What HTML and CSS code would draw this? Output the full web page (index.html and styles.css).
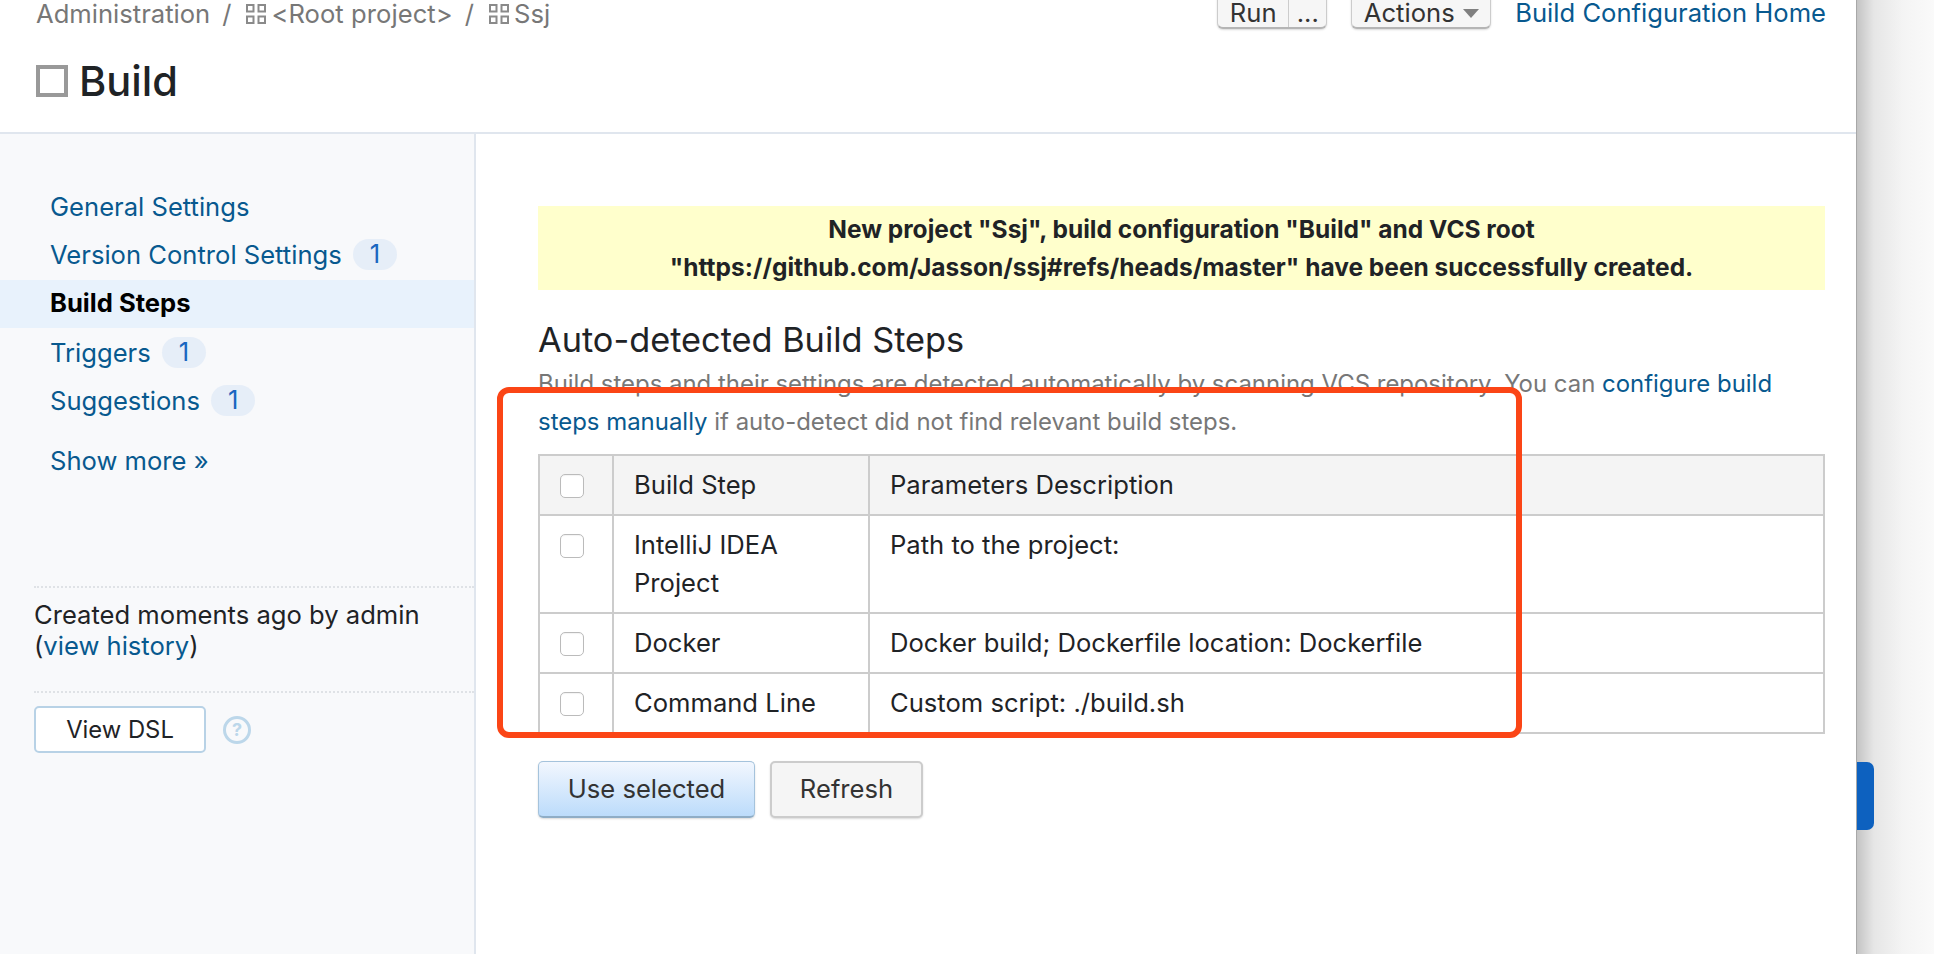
FILE: index.html
```html
<!DOCTYPE html>
<html lang="en">
<head>
  <meta charset="UTF-8">
  <meta name="viewport" content="width=device-width, initial-scale=1.0">
  <title>Build</title>
  <link rel="stylesheet" href="styles.css">
</head>
<body>
  <div class="panel">
    <header class="top">
      <div class="crumbs-row">
        <div class="crumbs">
          <span>Administration</span>
          <span class="slash">/</span>
          <svg class="grid-icon" viewBox="0 0 20 20"><path d="M1 1h6.5v6.5h-6.5zM12.5 1h6.5v6.5h-6.5zM1 12.5h6.5v6.5h-6.5zM12.5 12.5h6.5v6.5h-6.5z"/></svg>
          <span class="crumb-name">&lt;Root project&gt;</span>
          <span class="slash">/</span>
          <svg class="grid-icon" viewBox="0 0 20 20"><path d="M1 1h6.5v6.5h-6.5zM12.5 1h6.5v6.5h-6.5zM1 12.5h6.5v6.5h-6.5zM12.5 12.5h6.5v6.5h-6.5z"/></svg>
          <span class="crumb-name">Ssj</span>
        </div>
        <div class="top-actions">
          <div class="btn-top run-group">
            <span class="run">Run</span>
            <span class="more">...</span>
          </div>
          <div class="btn-top actions">Actions <i class="caret"></i></div>
          <a class="link home" href="#">Build Configuration Home</a>
        </div>
      </div>
      <h1 class="title"><span class="title-box"></span>Build</h1>
    </header>

    <div class="content">
      <aside class="side">
        <nav class="nav">
          <a class="nav-item" href="#">General Settings</a>
          <a class="nav-item" href="#">Version Control Settings <span class="badge">1</span></a>
          <a class="nav-item active" href="#">Build Steps</a>
          <a class="nav-item" href="#">Triggers <span class="badge">1</span></a>
          <a class="nav-item" href="#">Suggestions <span class="badge">1</span></a>
        </nav>
        <a class="link show-more" href="#">Show more »</a>
        <div class="created">Created moments ago by admin<br>(<a class="link" href="#">view history</a>)</div>
        <div class="dsl">
          <button class="btn-dsl">View DSL</button>
          <svg class="help" viewBox="0 0 28 28">
            <circle cx="14" cy="14" r="12.5"/>
            <text x="14" y="20" text-anchor="middle">?</text>
          </svg>
        </div>
      </aside>

      <main class="main">
        <div class="message">New project "Ssj", build configuration "Build" and VCS root<br>"https://github.com/Jasson/ssj#refs/heads/master" have been successfully created.</div>
        <h2 class="heading">Auto-detected Build Steps</h2>
        <p class="desc">Build steps and their settings are detected automatically by scanning VCS repository. You can <a class="link" href="#">configure build steps manually</a> if auto-detect did not find relevant build steps.</p>
        <table class="steps">
          <tr>
            <th class="check"><span class="box"></span></th>
            <th class="name">Build Step</th>
            <th>Parameters Description</th>
          </tr>
          <tr>
            <td class="check"><span class="box"></span></td>
            <td class="name">IntelliJ IDEA Project</td>
            <td>Path to the project:</td>
          </tr>
          <tr>
            <td class="check"><span class="box"></span></td>
            <td class="name">Docker</td>
            <td>Docker build; Dockerfile location: Dockerfile</td>
          </tr>
          <tr>
            <td class="check"><span class="box"></span></td>
            <td class="name">Command Line</td>
            <td>Custom script: ./build.sh</td>
          </tr>
        </table>
        <div class="form-btns">
          <button class="btn primary">Use selected</button>
          <button class="btn">Refresh</button>
        </div>
      </main>
    </div>

    <!-- annotation drawn over the screenshot -->
    <div class="annotation"></div>
  </div>

  <div class="shade">
    <div class="tab"></div>
  </div>
</body>
</html>
```

FILE: styles.css
```css
* {
  margin: 0;
  padding: 0;
  box-sizing: border-box;
}

body {
  display: flex;
  height: 954px;
  overflow: hidden;
  font-family: 'Inter', 'Liberation Sans', sans-serif;
  font-size: 25.6px;
  color: #1f2326;
  background: #fff;
}

.link {
  color: #08598f;
  text-decoration: none;
}

/* panel and the shaded strip on the right */
.panel {
  position: relative;
  width: 1857px;
  height: 954px;
  background: #fff;
  border-right: 1px solid #a8a8a8;
  display: flex;
  flex-direction: column;
}

.shade {
  position: relative;
  flex: 1;
  background: linear-gradient(to right, #c4c4c4, #e6e6e6 22%, #f4f4f4 60%, #fafafa);
}

.tab {
  position: absolute;
  left: 0;
  top: 762px;
  width: 17px;
  height: 68px;
  background: #0d61bf;
  border-radius: 0 7px 7px 0;
}

/* header */
.top {
  height: 134px;
  padding: 0 30px 0 36px;
  border-bottom: 2px solid #e0e6ee;
}

.crumbs-row {
  display: flex;
  justify-content: space-between;
  height: 29px;
}

.crumbs {
  display: flex;
  align-items: center;
  color: #777;
  height: 26px;
}

.slash {
  margin: 0 15px 0 12px;
}

.grid-icon {
  width: 20px;
  height: 20px;
  margin: 2px 5px 0 0;
  fill: none;
  stroke: #8a8a8a;
  stroke-width: 2;
}

.crumb-name {
  letter-spacing: 0.05px;
}

.top-actions {
  display: flex;
  align-items: flex-end;
  height: 29px;
}

.btn-top {
  height: 40px;
  display: flex;
  align-items: center;
  background: #f6f6f6;
  border: 1px solid #ccc;
  border-bottom: 2px solid #b5b5b5;
  border-radius: 6px;
  color: #333;
  box-shadow: 0 1px 2px rgba(0, 0, 0, 0.15);
  padding-top: 7px;
}

.run-group {
  width: 110px;
}

.run {
  width: 71px;
  align-self: stretch;
  display: flex;
  align-items: center;
  justify-content: center;
  border-right: 1px solid #ccc;
}

.more {
  flex: 1;
  text-align: center;
}

.actions {
  width: 140px;
  margin-left: 24px;
  justify-content: center;
  gap: 8px;
}

.caret {
  border-left: 8px solid transparent;
  border-right: 8px solid transparent;
  border-top: 9px solid #808080;
  margin-top: 3px;
}

.home {
  margin-left: 24px;
  height: 29px;
  line-height: 26px;
}

.title {
  display: flex;
  align-items: center;
  margin-top: 32px;
  font-size: 41.6px;
  font-weight: 500;
  line-height: 40px;
  color: #1f2326;
}

.title-box {
  width: 32px;
  height: 32px;
  border: 4px solid #999;
  margin-right: 11px;
}

/* sidebar + main */
.content {
  flex: 1;
  display: flex;
}

.side {
  width: 476px;
  padding-top: 50px;
  background: #f8f9fb;
  border-right: 2px solid #e0e6ee;
}

.nav-item {
  display: flex;
  align-items: center;
  height: 48px;
  padding: 0 0 3px 50px;
  color: #08598f;
  text-decoration: none;
  white-space: pre;
}

.nav-item.active {
  margin-bottom: 2px;
  background: #e8f2fc;
  color: #000;
  font-weight: 700;
}

.badge {
  width: 44px;
  height: 31px;
  margin-left: 4px;
  line-height: 29px;
  text-align: center;
  border-radius: 16px;
  background: #e6eef8;
  color: #1a66c0;
}

.show-more {
  display: block;
  margin: 11px 0 0 50px;
  line-height: 48px;
}

.created {
  margin: 101px 0 0 34px;
  padding: 11px 0 30px 0;
  line-height: 31px;
  border-top: 2px dotted #dfe2e6;
  border-bottom: 2px dotted #dfe2e6;
}

.dsl {
  display: flex;
  align-items: center;
  margin: 13px 0 0 34px;
}

.btn-dsl {
  width: 172px;
  height: 47px;
  font: inherit;
  font-size: 23.8px;
  color: #1f2326;
  background: #fff;
  border: 2px solid #b8d2e6;
  border-radius: 5px;
}

.help {
  width: 28px;
  height: 28px;
  margin-left: 17px;
  fill: none;
  stroke: #bcd7ea;
  stroke-width: 3;
}

.help text {
  fill: #bcd7ea;
  stroke: none;
  font-size: 18px;
  font-weight: 700;
}

.main {
  flex: 1;
  padding: 72px 31px 0 62px;
}

.message {
  height: 84px;
  padding-top: 4px;
  background: #ffffcc;
  font-weight: 700;
  font-size: 24.5px;
  line-height: 38px;
  text-align: center;
}

.heading {
  margin-top: 30px;
  font-size: 34.3px;
  font-weight: 400;
  line-height: 40px;
}

.desc {
  margin-top: 5px;
  font-size: 23.95px;
  color: #777;
  line-height: 38px;
}

/* table */
.steps {
  width: 100%;
  margin-top: 13px;
  border-collapse: collapse;
  border: 2px solid #ccc;
}

.steps th,
.steps td {
  padding: 10px 20px;
  border: 2px solid #ccc;
  font-weight: 400;
  line-height: 38px;
  text-align: left;
  vertical-align: top;
}

.steps th {
  background: #f4f4f4;
}

.check {
  width: 74px;
}

.name {
  width: 256px;
}

.box {
  display: block;
  width: 24px;
  height: 24px;
  margin-top: 8px;
  background: #fff;
  border: 1px solid #bbb;
  border-radius: 5px;
  box-shadow: inset 0 1px 1px rgba(0, 0, 0, 0.05);
}

.form-btns {
  display: flex;
  gap: 15px;
  margin-top: 27px;
}

.btn {
  width: 153px;
  height: 57px;
  padding-bottom: 2px;
  font: inherit;
  color: #333;
  background: #f5f5f5;
  border: 2px solid #ccc;
  border-radius: 5px;
  box-shadow: 0 1px 2px rgba(0, 0, 0, 0.15);
}

.btn.primary {
  width: 217px;
  background: linear-gradient(#f2f7fe, #bcdcfb);
  border: 1px solid #a5c3dc;
  border-bottom: 2px solid #8fadc6;
}

.annotation {
  position: absolute;
  left: 497px;
  top: 387px;
  width: 1025px;
  height: 351px;
  border: 6px solid #fb4516;
  border-radius: 12px;
}
```
